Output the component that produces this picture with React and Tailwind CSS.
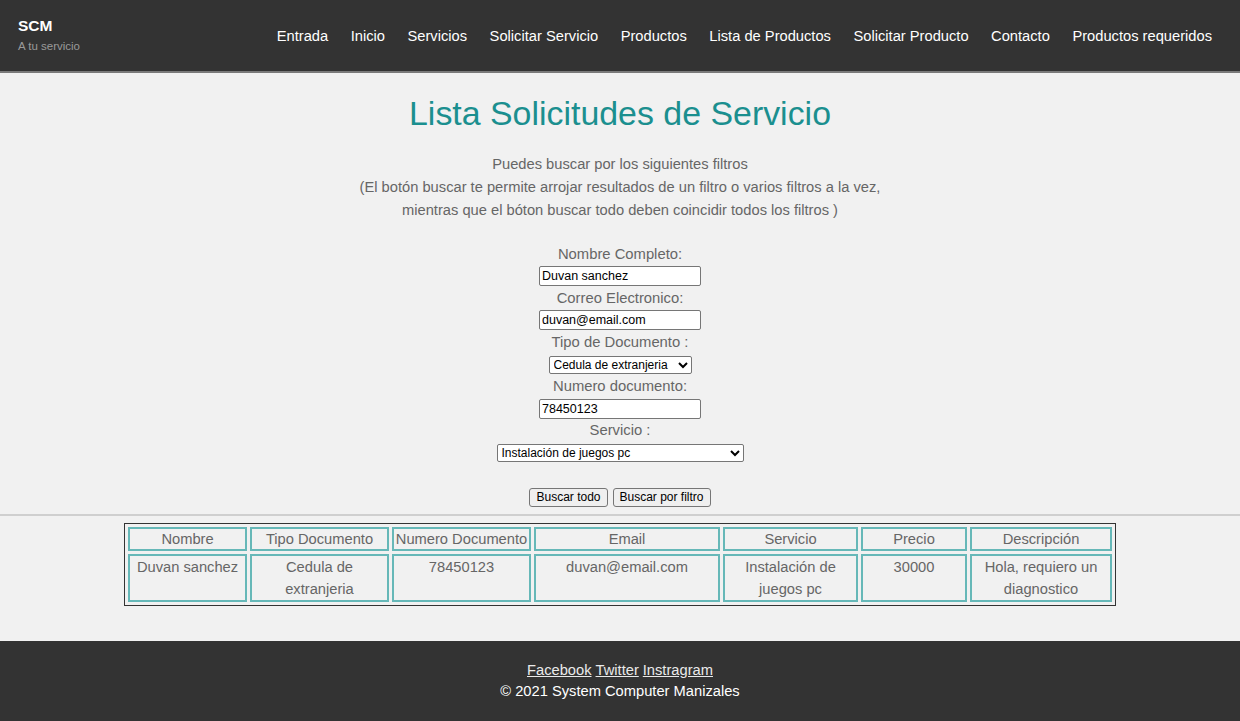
import React from "react";

const navItems = [
  "Entrada",
  "Inicio",
  "Servicios",
  "Solicitar Servicio",
  "Productos",
  "Lista de Productos",
  "Solicitar Producto",
  "Contacto",
  "Productos requeridos",
];

const headers = [
  ["Nombre", "w-[119px]"],
  ["Tipo Documento", "w-[139px]"],
  ["Numero Documento", "w-[139px]"],
  ["Email", "w-[186px]"],
  ["Servicio", "w-[135px]"],
  ["Precio", "w-[106px]"],
  ["Descripción", "w-[142px]"],
];

const row = [
  "Duvan sanchez",
  "Cedula de extranjeria",
  "78450123",
  "duvan@email.com",
  "Instalación de juegos pc",
  "30000",
  "Hola, requiero un diagnostico",
];

export default function App() {
  return (
    <div
      className="min-h-[721px] flex flex-col bg-[#f1f1f1] text-[#666]"
      style={{ fontFamily: '"Liberation Sans", Arial, sans-serif' }}
    >
      <header className="h-[73px] bg-[#333] border-b-2 border-[#7a7a7a] flex items-center justify-between pl-[18px] pr-[28px]">
        <div className="flex flex-col -mt-[2px]">
          <span className="text-white font-bold text-[15.5px] leading-[20px]">SCM</span>
          <span className="text-[#9a9a9a] text-[11.5px] leading-[16px] mt-[2px]">A tu servicio</span>
        </div>
        <nav className="flex items-center gap-[22.5px] mt-0">
          {navItems.map((n) => (
            <a key={n} className="text-white text-[14.7px] leading-[20px] cursor-pointer">
              {n}
            </a>
          ))}
        </nav>
      </header>

      <main className="flex-1 flex flex-col items-center">
        <h1 className="text-[33.9px] leading-[42px] text-[#1b8f8f] mt-[19px]">
          Lista Solicitudes de Servicio
        </h1>
        <p className="text-[14.7px] leading-[23px] text-center mt-[19px]">
          Puedes buscar por los siguientes filtros
          <br />
          (El botón buscar te permite arrojar resultados de un filtro o varios filtros a la vez,
          <br />
          mientras que el bóton buscar todo deben coincidir todos los filtros )
        </p>

        <label className="text-[14.8px] leading-[18px] mt-[23px]">Nombre Completo:</label>
        <input
          className="mt-[3px] w-[162px] h-[20px] bg-white border border-[#767676] rounded-[2px] px-[2px] text-[12.5px] text-black"
          defaultValue="Duvan sanchez"
        />
        <label className="text-[14.8px] leading-[18px] mt-[3px]">Correo Electronico:</label>
        <input
          className="mt-[3px] w-[162px] h-[20px] bg-white border border-[#767676] rounded-[2px] px-[2px] text-[12.5px] text-black"
          defaultValue="duvan@email.com"
        />
        <label className="text-[14.8px] leading-[18px] mt-[3px]">Tipo de Documento :</label>
        <select
          className="mt-[5px] w-[143px] h-[18px] bg-white border border-[#767676] rounded-[2px] text-[12px] text-black"
          defaultValue="ce"
        >
          <option value="ce">Cedula de extranjeria</option>
        </select>
        <label className="text-[14.8px] leading-[18px] mt-[3px]">Numero documento:</label>
        <input
          className="mt-[4px] w-[162px] h-[20px] bg-white border border-[#767676] rounded-[2px] px-[2px] text-[12.5px] text-black"
          defaultValue="78450123"
        />
        <label className="text-[14.8px] leading-[18px] mt-[2px]">Servicio :</label>
        <select
          className="mt-[5px] w-[247px] h-[18px] bg-white border border-[#767676] rounded-[2px] text-[12px] text-black"
          defaultValue="ij"
        >
          <option value="ij">Instalación de juegos pc</option>
        </select>

        <div className="mt-[26px] flex gap-[5px]">
          <button className="h-[19px] px-[6px] bg-[#efefef] border border-[#767676] rounded-[3px] text-[12px] text-black leading-[15px]">
            Buscar todo
          </button>
          <button className="h-[19px] px-[6px] bg-[#efefef] border border-[#767676] rounded-[3px] text-[12px] text-black leading-[15px]">
            Buscar por filtro
          </button>
        </div>

        <hr className="w-full mt-[7px] border-t-2 border-[#cfcfcf]" />

        <table className="mt-[7px] mb-[35px] w-[992px] table-fixed border border-[#333] border-separate border-spacing-[3px] text-[14.7px]">
          <colgroup>
            {headers.map(([h, w]) => (
              <col key={h} className={w} />
            ))}
          </colgroup>
          <thead>
            <tr>
              {headers.map(([h]) => (
                <th
                  key={h}
                  className="border-2 border-[#66b8b8] font-normal leading-[20px] text-center p-0"
                >
                  {h}
                </th>
              ))}
            </tr>
          </thead>
          <tbody>
            <tr>
              {row.map((c, i) => (
                <td
                  key={i}
                  className="border-2 border-[#66b8b8] leading-[22px] text-center align-top px-[1px] py-0 h-[48px]"
                >
                  {c}
                </td>
              ))}
            </tr>
          </tbody>
        </table>
      </main>

      <footer className="h-[80px] bg-[#333] flex flex-col items-center pt-[19px] text-white text-[14.7px] leading-[21px]">
        <div className="flex gap-[4px]">
          <a className="underline text-[#eaeaea] cursor-pointer">Facebook</a>
          <a className="underline text-[#eaeaea] cursor-pointer">Twitter</a>
          <a className="underline text-[#eaeaea] cursor-pointer">Instragram</a>
        </div>
        <div>© 2021 System Computer Manizales</div>
      </footer>
    </div>
  );
}
